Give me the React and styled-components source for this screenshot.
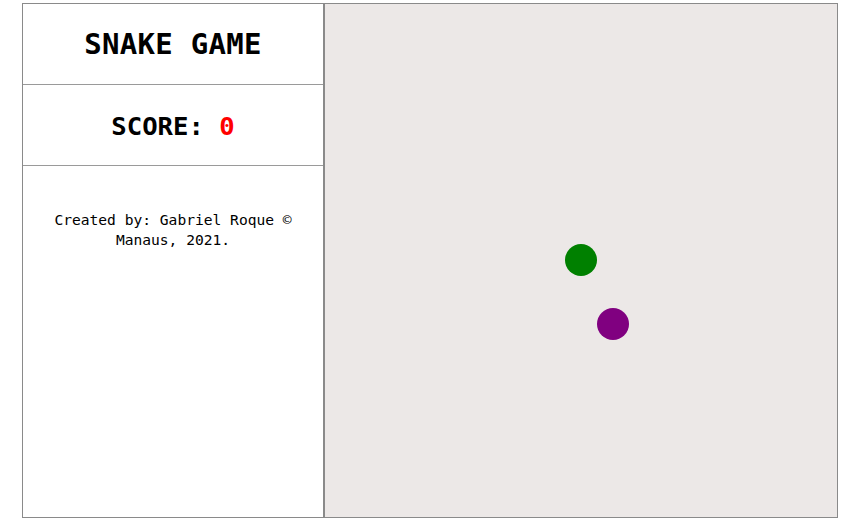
import React from "react";
import styled, { createGlobalStyle } from "styled-components";

const GlobalStyle = createGlobalStyle`
  body {
    margin: 0;
    background: #ffffff;
    font-family: "DejaVu Sans Mono", "Liberation Mono", monospace;
  }
`;

const Page = styled.div`
  display: flex;
  padding: 3px 0 0 22px;
`;

const SidePanel = styled.aside`
  width: 300px;
  height: 513px;
  border: 1px solid #8a8a8a;
  display: flex;
  flex-direction: column;
  color: #000;
`;

const Row = styled.div`
  height: 80px;
  border-bottom: 1px solid #9a9a9a;
  display: flex;
  align-items: center;
  justify-content: center;
`;

const Title = styled.h1`
  margin: 0;
  font-size: 29px;
  font-weight: bold;
  letter-spacing: 0.3px;
`;

const Score = styled.h2`
  margin: 2px 0 0;
  font-size: 25.6px;
  font-weight: bold;
`;

const Points = styled.span`
  color: red;
`;

const Credits = styled.p`
  margin: 0;
  padding: 44px 16px 0;
  font-size: 14.6px;
  line-height: 20px;
  text-align: center;
`;

const Board = styled.div`
  position: relative;
  width: 512px;
  height: 513px;
  background: #ece8e7;
  border: 1px solid #8a8a8a;
`;

const Dot = styled.div`
  position: absolute;
  width: 32px;
  height: 32px;
  border-radius: 50%;
  background: ${(p) => p.$color};
`;

const pieces = [
  { x: 240, y: 240, color: "green" },
  { x: 272, y: 304, color: "purple" },
];

export default function App() {
  return (
    <>
      <GlobalStyle />
      <Page>
        <SidePanel>
          <Row>
            <Title>SNAKE GAME</Title>
          </Row>
          <Row>
            <Score>
              SCORE: <Points>0</Points>
            </Score>
          </Row>
          <Credits>
            Created by: Gabriel Roque ©
            <br />
            Manaus, 2021.
          </Credits>
        </SidePanel>
        <Board>
          {pieces.map((p, i) => (
            <Dot key={i} $color={p.color} style={{ left: p.x, top: p.y }} />
          ))}
        </Board>
      </Page>
    </>
  );
}
